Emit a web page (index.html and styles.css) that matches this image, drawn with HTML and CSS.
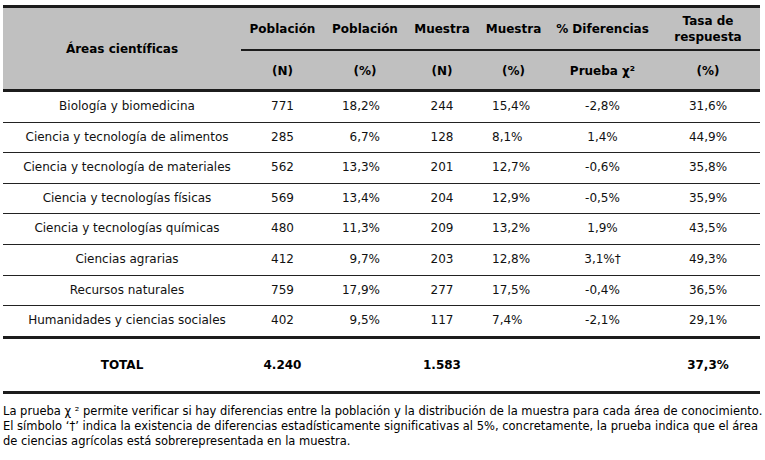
FILE: index.html
```html
<!DOCTYPE html>
<html lang="es">
<head>
<meta charset="utf-8">
<link rel="stylesheet" href="styles.css">
</head>
<body>
<table class="tbl">
  <colgroup>
    <col class="c-area"><col class="c-pn"><col class="c-pp"><col class="c-mn"><col class="c-mp"><col class="c-dif"><col class="c-tasa">
  </colgroup>
  <thead>
    <tr class="h1">
      <th rowspan="2" class="h-area">Áreas científicas</th>
      <th>Población</th>
      <th>Población</th>
      <th>Muestra</th>
      <th>Muestra</th>
      <th>% Diferencias</th>
      <th class="two">Tasa de<br>respuesta</th>
    </tr>
    <tr class="h2">
      <th>(N)</th>
      <th>(%)</th>
      <th>(N)</th>
      <th>(%)</th>
      <th>Prueba χ²</th>
      <th>(%)</th>
    </tr>
  </thead>
  <tbody class="body">
    <tr><td class="area">Biología y biomedicina</td><td>771</td><td class="pp">18,2%</td><td>244</td><td class="mp">15,4%</td><td>-2,8%</td><td>31,6%</td></tr>
    <tr><td class="area">Ciencia y tecnología de alimentos</td><td>285</td><td class="pp">6,7%</td><td>128</td><td class="mp">8,1%</td><td>1,4%</td><td>44,9%</td></tr>
    <tr><td class="area">Ciencia y tecnología de materiales</td><td>562</td><td class="pp">13,3%</td><td>201</td><td class="mp">12,7%</td><td>-0,6%</td><td>35,8%</td></tr>
    <tr><td class="area">Ciencia y tecnologías físicas</td><td>569</td><td class="pp">13,4%</td><td>204</td><td class="mp">12,9%</td><td>-0,5%</td><td>35,9%</td></tr>
    <tr><td class="area">Ciencia y tecnologías químicas</td><td>480</td><td class="pp">11,3%</td><td>209</td><td class="mp">13,2%</td><td>1,9%</td><td>43,5%</td></tr>
    <tr><td class="area">Ciencias agrarias</td><td>412</td><td class="pp">9,7%</td><td>203</td><td class="mp">12,8%</td><td>3,1%†</td><td>49,3%</td></tr>
    <tr><td class="area">Recursos naturales</td><td>759</td><td class="pp">17,9%</td><td>277</td><td class="mp">17,5%</td><td>-0,4%</td><td>36,5%</td></tr>
    <tr><td class="area">Humanidades y ciencias sociales</td><td>402</td><td class="pp">9,5%</td><td>117</td><td class="mp">7,4%</td><td>-2,1%</td><td>29,1%</td></tr>
  </tbody>
  <tbody class="total">
    <tr><td>TOTAL</td><td>4.240</td><td></td><td>1.583</td><td></td><td></td><td>37,3%</td></tr>
  </tbody>
</table>
<p class="note">La prueba χ ² permite verificar si hay diferencias entre la población y la distribución de la muestra para cada área de conocimiento.<br>El símbolo ‘†’ indica la existencia de diferencias estadísticamente significativas al 5%, concretamente, la prueba indica que el área<br>de ciencias agrícolas está sobrerepresentada en la muestra.</p>
</body>
</html>
```

FILE: styles.css
```css
html, body {
  margin: 0;
  padding: 0;
  background: #fff;
}
body {
  padding: 5px 0 0 3px;
  font-family: "DejaVu Sans", Verdana, sans-serif;
  font-size: 12px;
  color: #000;
}
.tbl {
  border-collapse: separate;
  border-spacing: 0;
  table-layout: fixed;
  width: 757px;
}
.c-area { width: 238px; }
.c-pn { width: 83px; }
.c-pp { width: 82px; }
.c-mn { width: 72px; }
.c-mp { width: 71px; }
.c-dif { width: 107px; }
.c-tasa { width: 104px; }

thead th {
  background: #c0c0c0;
  font-weight: bold;
  text-align: center;
  padding: 0;
  line-height: 16px;
}
.h1 th {
  border-top: 3px solid #1c1c1c;
  height: 41px;
  vertical-align: middle;
}
.h1 th:not(.h-area) {
  border-bottom: 2px solid #1c1c1c;
}
.h-area {
  border-bottom: 3px solid #1c1c1c;
}
.h2 th {
  height: 36px;
  padding-top: 2px;
  border-bottom: 3px solid #1c1c1c;
}

.body td {
  text-align: center;
  line-height: 15px;
  padding: 7px 0 7.6px;
  border-bottom: 1px solid #222;
  color: #111;
}
.body td.area {
  padding-left: 10px;
}
.body tr:last-child td {
  border-bottom: 3px solid #1c1c1c;
}
.body td.pp {
  text-align: right;
  padding-right: 26px;
}
.body td.mp {
  text-align: left;
  padding-left: 14px;
}
.total td {
  text-align: center;
  font-weight: bold;
  height: 52px;
  padding: 0;
  border-bottom: 3px solid #1c1c1c;
}
.note {
  margin: 10px 0 0;
  font-size: 11.5px;
  line-height: 15px;
  white-space: nowrap;
}
```
